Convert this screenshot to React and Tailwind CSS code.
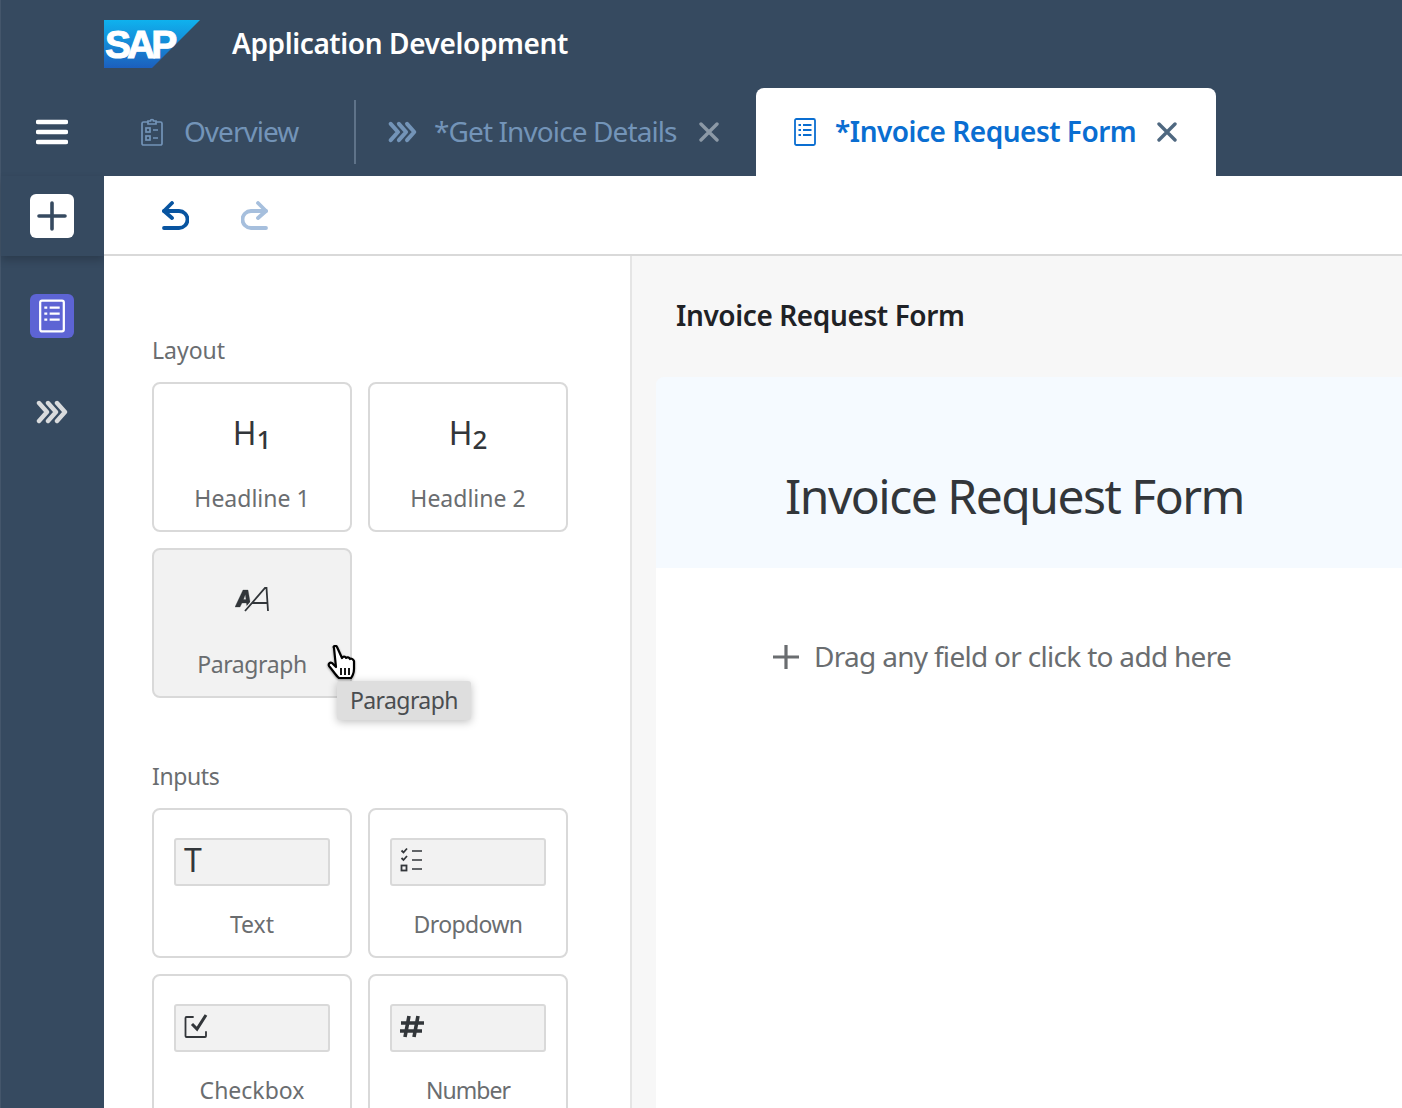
const font = { fontFamily: '"Noto Sans", "Open Sans", sans-serif' };

function Chevrons({ className }) {
  return (
    <svg viewBox="0 0 32 24" className={className} fill="none" stroke="currentColor" strokeWidth="4.4" strokeLinecap="round" strokeLinejoin="round">
      <path d="M3 3l8 9-8 9" />
      <path d="M12 3l8 9-8 9" />
      <path d="M21 3l8 9-8 9" />
    </svg>
  );
}

function FormIcon({ className, sw = 1.8 }) {
  return (
    <svg viewBox="0 0 22 28" className={className} fill="none" stroke="currentColor" strokeWidth={sw}>
      <rect x="1" y="1" width="20" height="26" rx="1.5" />
      <path d="M4.500 7h2.500M9 7h8.500M4.500 12h2.500M9 12h8.500M4.500 17h2.500M9 17h8.500" />
    </svg>
  );
}

function CloseIcon({ className }) {
  return (
    <svg viewBox="0 0 20 20" className={className} fill="none" stroke="currentColor" strokeWidth="3.4" strokeLinecap="round">
      <path d="M2 2l16 16M18 2L2 18" />
    </svg>
  );
}

function SapLogo() {
  return (
    <svg viewBox="0 0 96 48" className="h-12 w-24">
      <defs>
        <linearGradient id="sapfill" x1="0" y1="0" x2="0" y2="1">
          <stop offset="0" stopColor="#0fb2ee" />
          <stop offset="1" stopColor="#1c5fbe" />
        </linearGradient>
      </defs>
      <polygon points="0,0 96,0 48,48 0,48" fill="url(#sapfill)" />
      <text x="1" y="38" fontFamily="Liberation Sans" fontWeight="700" fontSize="39" letterSpacing="-4" fill="#fff" stroke="#fff" strokeWidth="1">SAP</text>
    </svg>
  );
}

function ParagraphIcon() {
  return (
    <svg viewBox="0 0 34 26" className="h-[26px] w-[34px] text-[#32363a]" fill="none" stroke="currentColor">
      <path d="M0 21L8 4h5l3 17h-4l-.6-4H7l-2 4zM8.500 13.500h2.500l-.7-5z" fill="currentColor" fillRule="evenodd" strokeWidth="0.3" />
      <path d="M9 26L31 1" stroke="#f2f2f2" strokeWidth="4" />
      <path d="M10 25L30 2h1.500L33 25M17 17h15" strokeWidth="1.8" />
    </svg>
  );
}

function DropdownIcon() {
  return (
    <svg viewBox="0 0 24 26" className="h-[26px] w-6 text-[#32363a]" fill="none" stroke="currentColor" strokeWidth="1.6">
      <path d="M1.500 3.500l2 2 3.500-4M1.500 11l2 2 3.500-4" strokeWidth="1.8" />
      <rect x="1.500" y="18.500" width="5" height="5" strokeWidth="1.8" />
      <path d="M12 4h10M12 13h10M12 22h10" />
    </svg>
  );
}

function CheckboxIcon() {
  return (
    <svg viewBox="0 0 24 24" className="h-6 w-6 text-[#32363a]" fill="none" stroke="currentColor" strokeWidth="1.8">
      <path d="M9 3H2.500a1 1 0 0 0-1 1v18a1 1 0 0 0 1 1H21a1 1 0 0 0 1-1v-4" strokeLinecap="round" />
      <path d="M8 10l5 5 9-14" strokeWidth="3" />
    </svg>
  );
}

function HashIcon() {
  return (
    <svg viewBox="0 0 24 24" className="h-6 w-6 text-[#32363a]" fill="none" stroke="currentColor" strokeWidth="3.6">
      <path d="M9 2L5 23M18 2l-4 21M1 9h23M0 17h22" />
    </svg>
  );
}

function OverviewIcon() {
  return (
    <svg viewBox="0 0 22 30" className="h-[30px] w-[22px]" fill="none" stroke="currentColor" strokeWidth="1.7">
      <path d="M7 5H2.500A1.500 1.500 0 0 0 1 6.500v20A1.500 1.500 0 0 0 2.500 28h17a1.500 1.500 0 0 0 1.500-1.500v-20A1.500 1.500 0 0 0 19.500 5H15" />
      <path d="M7 7V4h2.500a1.500 1.500 0 0 1 3 0H15v3z" />
      <rect x="5" y="11" width="4" height="4" />
      <rect x="5" y="19" width="4" height="4" />
      <path d="M12 13h5M12 21h5" />
    </svg>
  );
}

function UndoIcon({ className, flip }) {
  return (
    <svg viewBox="0 0 28 30" className={className} fill="none" stroke="currentColor" strokeWidth="3.8" strokeLinecap="round" strokeLinejoin="round">
      <g transform={flip ? "translate(28 0) scale(-1 1)" : undefined}>
        <path d="M11 2L3 10l8 7" />
        <path d="M3 10h15a7.500 7.500 0 0 1 0 17H3" />
      </g>
    </svg>
  );
}

function Tile({ label, hovered, track = "", children }) {
  return (
    <div className={`flex h-[150px] w-[200px] flex-col items-center rounded-lg border-2 border-[#d9d9d9] ${hovered ? "bg-[#f2f2f2]" : "bg-white"}`}>
      <div className="flex h-[98px] w-full items-center justify-center">{children}</div>
      <div className={`text-[23px] leading-[32px] text-[#6a6d70] ${track}`}>{label}</div>
    </div>
  );
}

function InputPreview({ children }) {
  return (
    <div className="mt-[6px] flex h-12 w-[156px] items-center rounded-[3px] border-2 border-[#d9d9d9] bg-[#f2f2f2] pb-1 pl-2">
      {children}
    </div>
  );
}

function Heading({ n }) {
  return (
    <span className="text-[32px] leading-none text-[#32363a]">
      H<span className="relative top-[4px] text-[26px] font-medium">{n}</span>
    </span>
  );
}

export default function App() {
  return (
    <div className="flex h-[1108px] w-[1402px] overflow-hidden bg-[#364a60]" style={font}>
      <aside className="flex w-[104px] shrink-0 flex-col border-l border-[#44566b] text-white">
        <div className="h-[88px]" />
        <div className="flex h-[88px] items-center justify-center pr-[1px]">
          <svg viewBox="0 0 32 26" className="h-[26px] w-8" fill="none" stroke="white" strokeWidth="4.4" strokeLinecap="round">
            <path d="M2 3h28M2 13h28M2 23h28" />
          </svg>
        </div>
        <div className="flex h-[80px] items-start justify-center pt-[18px] pr-[1px] shadow-[0_4px_8px_rgba(0,0,0,0.2)]">
          <div className="flex h-11 w-11 items-center justify-center rounded-md bg-white">
            <svg viewBox="0 0 30 30" className="h-[30px] w-[30px]" fill="none" stroke="#364a60" strokeWidth="3.6" strokeLinecap="round">
              <path d="M15 2v26M2 15h26" />
            </svg>
          </div>
        </div>
        <div className="mt-[38px] flex justify-center pr-[1px]">
          <div className="flex h-11 w-11 items-center justify-center rounded-md bg-[#5d64d4]">
            <FormIcon className="h-[34px] w-[26px] text-white" sw="1.9" />
          </div>
        </div>
        <div className="mt-[62px] flex justify-center pr-[1px] text-[#d9dbdd]">
          <Chevrons className="h-6 w-8" />
        </div>
      </aside>

      <div className="flex min-w-0 flex-1 flex-col">
        <header className="flex h-[88px] items-center">
          <SapLogo />
          <h1 className="mb-[2px] ml-[32px] text-[28px] font-semibold tracking-[-0.4px] text-white">Application Development</h1>
        </header>

        <nav className="flex h-[88px] items-stretch">
          <div className="flex w-[250px] items-center pl-[37px] text-[#7394b8]">
            <OverviewIcon />
            <span className="mb-[3px] ml-[21px] text-[28px] tracking-[-1px]">Overview</span>
          </div>
          <div className="my-3 w-[2px] bg-[#5f7389]" />
          <div className="flex w-[400px] items-center pl-[32px] text-[#7394b8]">
            <Chevrons className="h-[22px] w-[29px]" />
            <span className="mb-[3px] ml-[17px] text-[28px] tracking-[-0.9px]">*Get Invoice Details</span>
            <CloseIcon className="ml-[22px] h-5 w-5 text-[#8c99a6]" />
          </div>
          <div className="flex w-[460px] items-center rounded-t-lg bg-white pl-[38px]">
            <FormIcon className="h-7 w-[22px] text-[#0a6ed1]" />
            <span className="mb-[3px] ml-[19px] text-[28px] font-semibold tracking-[-0.5px] text-[#0a6ed1]">*Invoice Request Form</span>
            <CloseIcon className="ml-[21px] h-5 w-5 text-[#4f6880]" />
          </div>
        </nav>

        <div className="flex h-[80px] items-center gap-[52px] border-b-2 border-[#d9d9d9] bg-white pl-[57px] pt-[2px]">
          <UndoIcon className="h-[30px] w-7 text-[#0854a0]" />
          <UndoIcon className="h-[30px] w-7 text-[#a6bfdd]" flip />
        </div>

        <div className="relative flex min-h-0 flex-1">
          <section className="w-[526px] shrink-0 bg-white px-12 pt-[77px]">
            <h2 className="text-[23px] leading-[34px] text-[#6a6d70]">Layout</h2>
            <div className="mt-[15px] grid grid-cols-[200px_200px] gap-4">
              <Tile label="Headline 1"><Heading n="1" /></Tile>
              <Tile label="Headline 2"><Heading n="2" /></Tile>
              <Tile label="Paragraph" hovered track="tracking-[-0.4px]"><ParagraphIcon /></Tile>
            </div>
            <h2 className="mt-[61px] text-[23px] leading-[34px] tracking-[-0.4px] text-[#6a6d70]">Inputs</h2>
            <div className="mt-[15px] grid grid-cols-[200px_200px] gap-4">
              <Tile label="Text">
                <InputPreview><span className="text-[32px] leading-none text-[#32363a]">T</span></InputPreview>
              </Tile>
              <Tile label="Dropdown" track="tracking-[-0.6px]">
                <InputPreview><DropdownIcon /></InputPreview>
              </Tile>
              <Tile label="Checkbox">
                <InputPreview><CheckboxIcon /></InputPreview>
              </Tile>
              <Tile label="Number" track="tracking-[-1px]">
                <InputPreview><HashIcon /></InputPreview>
              </Tile>
            </div>
          </section>

          <main className="flex min-w-0 flex-1 flex-col border-l-2 border-[#e5e5e5] bg-[#f7f7f7] pl-6">
            <h2 className="flex h-[121px] shrink-0 items-start pt-[40px] pl-5 text-[28px] font-semibold leading-[38px] tracking-[-0.4px] text-[#1f2226]">Invoice Request Form</h2>
            <div className="flex h-[191px] shrink-0 items-center rounded-tl-lg bg-[#f5faff] pl-[129px] pt-[46px]">
              <span className="text-[48px] leading-none tracking-[-1.5px] text-[#32363a]">Invoice Request Form</span>
            </div>
            <div className="flex flex-1 items-start gap-[15px] bg-white pl-[117px] pt-[67px]">
              <svg viewBox="0 0 26 26" className="mt-[9px] h-[26px] w-[26px]" fill="none" stroke="#6a6d70" strokeWidth="3.2">
                <path d="M13 1v24M0 13h26" />
              </svg>
              <span className="text-[28px] leading-[42px] tracking-[-0.7px] text-[#6a6d70]">Drag any field or click to add here</span>
            </div>
          </main>

          <div className="absolute left-[233px] top-[425px] rounded-[3px] bg-[#dedede] px-[13px] py-[3px] text-[23px] leading-[33px] tracking-[-0.6px] text-[#4a4d50] shadow-[0_2px_8px_rgba(0,0,0,0.25)]">
            Paragraph
          </div>
          <svg viewBox="0 0 30 36" className="absolute left-[223px] top-[389px] h-9 w-[30px] drop-shadow-[0_1px_1px_rgba(0,0,0,0.4)]" fill="white" stroke="black" strokeWidth="2.200" strokeLinejoin="round">
            <path d="M7 3c-1.500-2 2-3 3-1l5 11 1-1c1-1 3 0 3 1 1-1 3-1 4 1 1-1 3 0 4 2l0 8c0 4-2 8-3 9H12c-3-2-7-9-10-12-1-2 1-4 3-3l4 4z" />
            <path d="M14 23v7M18 23v7M22 23v7" strokeWidth="1.800" />
          </svg>
        </div>
      </div>
    </div>
  );
}
